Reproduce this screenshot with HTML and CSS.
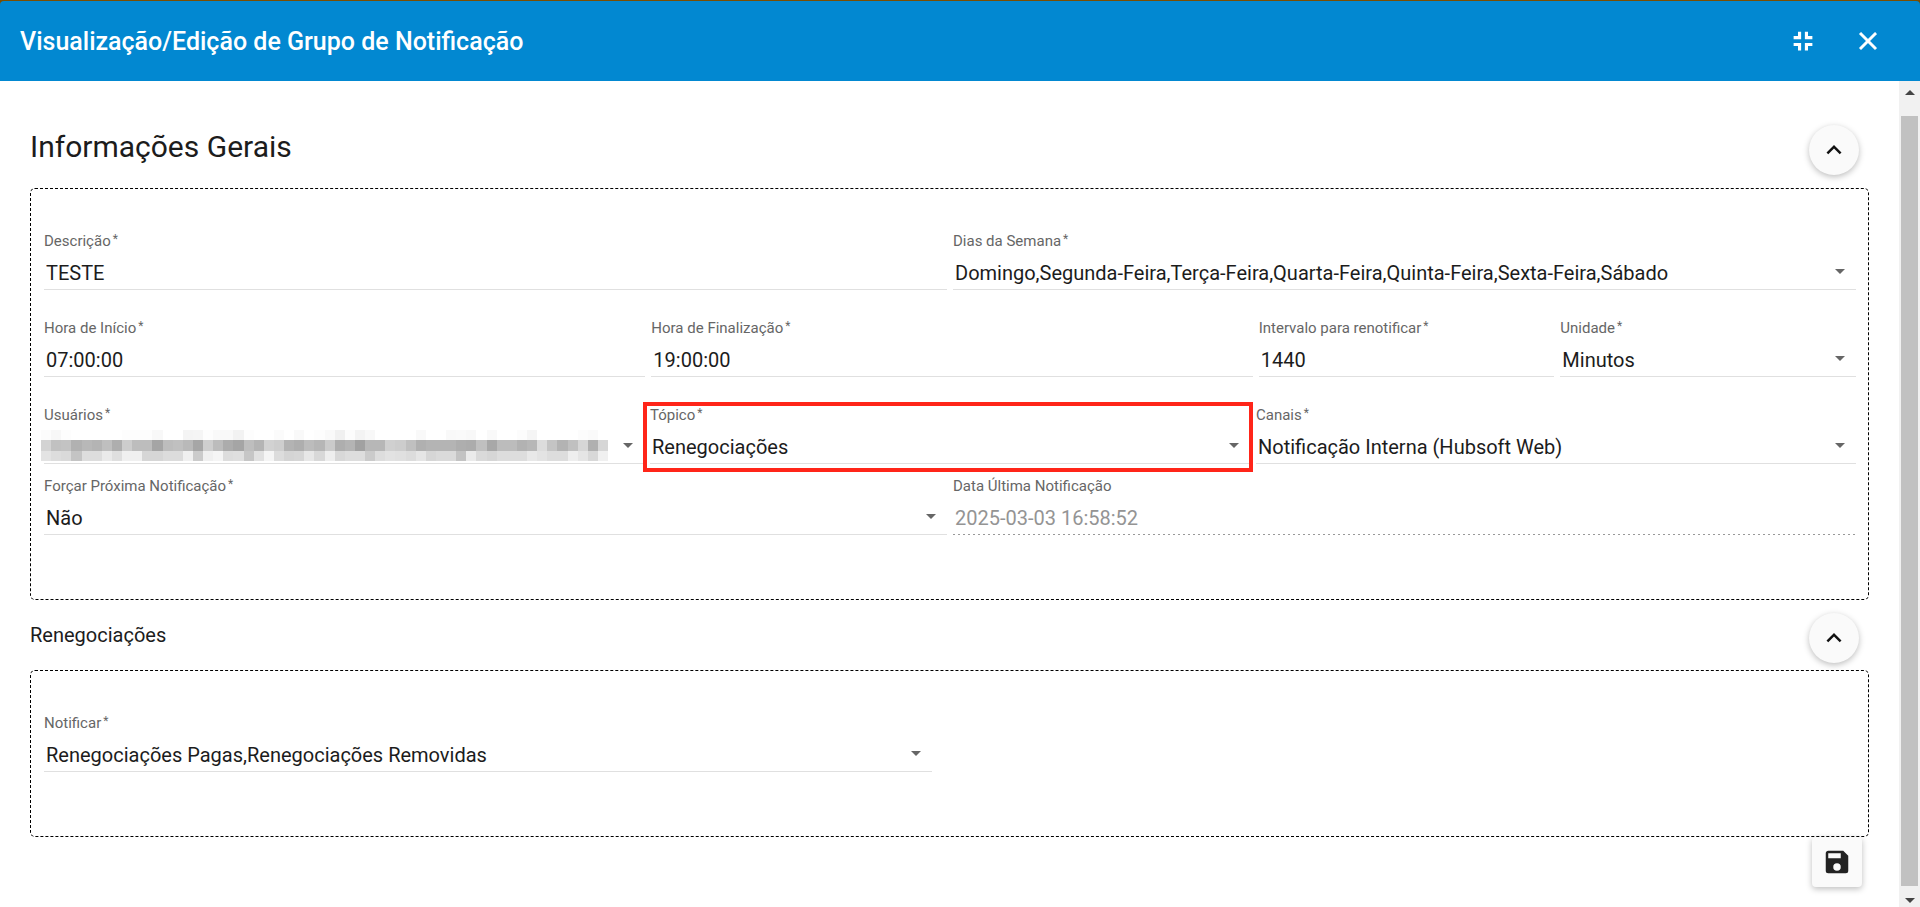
FILE: index.html
```html
<!DOCTYPE html>
<html lang="pt-BR">
<head>
<meta charset="utf-8">
<meta name="viewport" content="width=device-width, initial-scale=1">
<title>Visualização/Edição de Grupo de Notificação</title>
<link rel="stylesheet" href="styles.css">
</head>
<body>
<div class="dialog">
  <header class="toolbar">
    <h1 class="toolbar-title">Visualização/Edição de Grupo de Notificação</h1>
    <div class="toolbar-actions">
      <button class="icon-button" type="button" aria-label="Sair da tela cheia">
        <svg class="icon" viewBox="0 0 24 24"><path d="M4.500 13.500H10.500V19.500H8V16H4.500ZM13.500 13.500H19.500V16H16V19.500H13.500ZM8 4.500H10.500V10.500H4.500V8H8ZM13.500 4.500H16V8H19.500V10.500H13.500Z"/></svg>
      </button>
      <button class="icon-button" type="button" aria-label="Fechar">
        <svg class="icon icon-bold" viewBox="0 0 24 24"><path d="M19 6.410L17.590 5L12 10.590L6.410 5L5 6.410L10.590 12L5 17.590L6.410 19L12 13.410L17.590 19L19 17.590L13.410 12Z"/></svg>
      </button>
    </div>
  </header>
  <div class="body">
    <main class="content">
      <section>
        <div class="section-head">
          <h2 class="section-title section-title-large">Informações Gerais</h2>
          <button class="fab" type="button" aria-label="Recolher Informações Gerais">
            <svg class="icon" viewBox="0 0 24 24"><path d="M7.410 15.410L12 10.830L16.590 15.410L18 14L12 8L6 14Z"/></svg>
          </button>
        </div>
        <div class="panel">
          <div class="row row-halves row-spaced">
            <div class="field">
              <label class="label" for="descricao">Descrição<span class="required">*</span></label>
              <input class="control" id="descricao" type="text" value="TESTE">
            </div>
            <div class="field">
              <label class="label" for="dias">Dias da Semana<span class="required">*</span></label>
              <div class="select-box">
                <select class="control" id="dias"><option>Domingo,Segunda-Feira,Terça-Feira,Quarta-Feira,Quinta-Feira,Sexta-Feira,Sábado</option></select>
                <span class="caret"></span>
              </div>
            </div>
          </div>
          <div class="row row-times row-spaced">
            <div class="field">
              <label class="label" for="inicio">Hora de Início<span class="required">*</span></label>
              <input class="control" id="inicio" type="text" value="07:00:00">
            </div>
            <div class="field">
              <label class="label" for="fim">Hora de Finalização<span class="required">*</span></label>
              <input class="control" id="fim" type="text" value="19:00:00">
            </div>
            <div class="field">
              <label class="label" for="intervalo">Intervalo para renotificar<span class="required">*</span></label>
              <input class="control" id="intervalo" type="text" value="1440">
            </div>
            <div class="field">
              <label class="label" for="unidade">Unidade<span class="required">*</span></label>
              <div class="select-box">
                <select class="control" id="unidade"><option>Minutos</option></select>
                <span class="caret"></span>
              </div>
            </div>
          </div>
          <div class="row row-thirds">
            <div class="field">
              <label class="label" for="usuarios">Usuários<span class="required">*</span></label>
              <div class="select-box">
                <select class="control" id="usuarios"><option></option></select>
                <span class="caret"></span>
                <svg class="mosaic" id="mosaic" viewBox="0 0 56 3" preserveAspectRatio="none" shape-rendering="crispEdges" aria-hidden="true"></svg>
              </div>
            </div>
            <div class="field field-marked">
              <label class="label" for="topico">Tópico<span class="required">*</span></label>
              <div class="select-box">
                <select class="control" id="topico"><option>Renegociações</option></select>
                <span class="caret"></span>
              </div>
            </div>
            <div class="field">
              <label class="label" for="canais">Canais<span class="required">*</span></label>
              <div class="select-box">
                <select class="control" id="canais"><option>Notificação Interna (Hubsoft Web)</option></select>
                <span class="caret"></span>
              </div>
            </div>
          </div>
          <div class="row row-halves">
            <div class="field">
              <label class="label" for="forcar">Forçar Próxima Notificação<span class="required">*</span></label>
              <div class="select-box">
                <select class="control" id="forcar"><option>Não</option></select>
                <span class="caret"></span>
              </div>
            </div>
            <div class="field">
              <label class="label" for="ultima">Data Última Notificação</label>
              <input class="control" id="ultima" type="text" value="2025-03-03 16:58:52" disabled>
            </div>
          </div>
        </div>
      </section>
      <section>
        <div class="section-head section-head-compact">
          <h2 class="section-title">Renegociações</h2>
          <button class="fab" type="button" aria-label="Recolher Renegociações">
            <svg class="icon" viewBox="0 0 24 24"><path d="M7.410 15.410L12 10.830L16.590 15.410L18 14L12 8L6 14Z"/></svg>
          </button>
        </div>
        <div class="panel">
          <div class="row row-single">
            <div class="field">
              <label class="label" for="notificar">Notificar<span class="required">*</span></label>
              <div class="select-box">
                <select class="control" id="notificar"><option>Renegociações Pagas,Renegociações Removidas</option></select>
                <span class="caret"></span>
              </div>
            </div>
          </div>
        </div>
      </section>
      <div class="footer">
        <button class="fab fab-square" type="button" aria-label="Salvar">
          <svg class="icon" viewBox="0 0 24 24"><path d="M15 9H5V5H15M12 19A3 3 0 0 1 9 16A3 3 0 0 1 12 13A3 3 0 0 1 15 16A3 3 0 0 1 12 19M17 3H5C3.890 3 3 3.900 3 5V19A2 2 0 0 0 5 21H19A2 2 0 0 0 21 19V7L17 3Z"/></svg>
        </button>
      </div>
    </main>
    <div class="scrollbar" aria-hidden="true">
      <span class="scroll-arrow scroll-arrow-up"></span>
      <span class="scroll-thumb"></span>
      <span class="scroll-arrow scroll-arrow-down"></span>
    </div>
  </div>
</div>
<script src="script.js"></script>
</body>
</html>
```
FILE: styles.css
```css
* {
  box-sizing: border-box;
}

body {
  margin: 0;
  background: #7a4d00;
  color: #1c1c1c;
  font-family: Roboto, "Liberation Sans", sans-serif;
  font-size: 20px;
}

.dialog {
  display: flex;
  flex-direction: column;
  min-height: 100vh;
  padding-top: 1px;
}

.toolbar {
  display: flex;
  align-items: center;
  justify-content: space-between;
  height: 80px;
  padding: 0 30px 0 20px;
  border-radius: 4px 4px 0 0;
  background: #0288d1;
  color: #fff;
}

.toolbar-title {
  margin: 0;
  font-size: 25px;
  font-weight: 500;
}

.toolbar-actions {
  display: flex;
  gap: 20px;
}

.icon-button {
  display: grid;
  place-items: center;
  width: 45px;
  height: 50px;
  padding: 0;
  border: 0;
  background: none;
  color: inherit;
}

.icon {
  width: 30px;
  height: 30px;
  fill: currentColor;
}

.icon-bold {
  stroke: currentColor;
  stroke-width: 0.4;
}

.body {
  display: flex;
  flex: 1;
  background: #fff;
}

.content {
  flex: 1;
  min-width: 0;
  padding: 44px 30px 20px;
}

.section-head {
  display: flex;
  align-items: center;
  justify-content: space-between;
  padding: 0 10px 13px 0;
}

.section-head-compact {
  padding: 13px 10px 7px 0;
}

.section-title {
  margin: 0;
  padding-bottom: 6px;
  font-size: 20px;
  font-weight: 400;
}

.section-title-large {
  padding-bottom: 8px;
  font-size: 30px;
}

.fab {
  display: grid;
  place-items: center;
  width: 50px;
  height: 50px;
  padding: 0;
  border: 0;
  border-radius: 50%;
  background: #fafafa;
  color: #111;
  box-shadow: 0 2px 6px rgba(0, 0, 0, 0.26);
}

.fab-square {
  border-radius: 4px;
  color: #222;
}

.panel {
  padding: 42px 12px 64px 13px;
  border: 1px dashed #000;
  border-radius: 5px;
}

.row {
  display: grid;
  gap: 6px;
  padding-bottom: 12px;
}

.row:last-child {
  padding-bottom: 0;
}

.row-spaced {
  padding-bottom: 28px;
}

.row-halves {
  grid-template-columns: 1fr 1fr;
}

.row-thirds {
  grid-template-columns: 1fr 1fr 1fr;
}

.row-times {
  grid-template-columns: 602fr 602fr 296fr 296fr;
}

.row-single {
  grid-template-columns: 49%;
}

.field {
  display: flex;
  flex-direction: column;
  gap: 6px;
  min-width: 0;
}

.field-marked {
  position: relative;
}

.field-marked::after {
  content: "";
  position: absolute;
  inset: -3px -3px -8px -7px;
  border: 4px solid #ff2519;
  pointer-events: none;
}

.label {
  color: #666;
  font-size: 15px;
  line-height: 20px;
}

.required {
  margin-left: 2px;
  font-size: 12px;
  line-height: 12px;
  vertical-align: 3px;
}

.control {
  display: block;
  width: 100%;
  height: 33px;
  margin: 0;
  padding: 0 2px;
  border: 0;
  border-bottom: 1px solid #e0e0e0;
  border-radius: 0;
  background: transparent;
  color: #1c1c1c;
  font-family: inherit;
  font-size: 20px;
  appearance: none;
}

.control:disabled {
  border-bottom-color: transparent;
  background: repeating-linear-gradient(to right, #999 0 2px, transparent 2px 5px) left bottom / 100% 1px no-repeat border-box;
  color: #949494;
}

.select-box {
  position: relative;
}

.caret {
  position: absolute;
  top: 12px;
  right: 11px;
  border: 5px solid transparent;
  border-top-color: #666;
  border-bottom: 0;
  pointer-events: none;
}

.mosaic {
  position: absolute;
  top: -1px;
  left: -3px;
  width: calc(100% - 33px);
  height: 31px;
}

.footer {
  display: flex;
  justify-content: flex-end;
  padding-right: 7px;
}

.scrollbar {
  display: flex;
  flex-direction: column;
  align-items: center;
  width: 21px;
  background: #f1f1f1;
}

.scroll-arrow {
  border: 5px solid transparent;
}

.scroll-arrow-up {
  margin: 9px 0 21px;
  border-top: 0;
  border-bottom-color: #444;
}

.scroll-thumb {
  flex: 1;
  width: 17px;
  background: #c1c1c1;
}

.scroll-arrow-down {
  margin: 12px 0 4px;
  border-bottom: 0;
  border-top-color: #444;
}
```
FILE: script.js
```javascript
// Grey levels (two hex digits per cell) for the masked user names.
const rows = [
  "fcf7fdfffffffffffdfdfdf8fffff4f5fdf9f9f2fdfffffbfff9fffdf9f0fcf3f8fffffffff9fffff9faf8fff9fffffcf5fffffffffcfaff",
  "d3c1c3b1b8b4bfaecdbdbda5bdc0b9a6cebcaca5beb4d2ceb3aebcb6cbaeb4a1b7b7d0cdc0b0b4b4b4aeacc0a8bcbcb2b7dcc4b3c0d6b0d6",
  "e3dddac4ddddeadff0f0d6d6dcdcf0cbf0f5dddfc6e1f5dcd4d6e7d8eed8ddddcbdde2e0dce5d6dadac3ebdad6dddddde8e3ddddeee5d8f0"
];
const mosaic = document.getElementById("mosaic");
rows.forEach((row, y) => {
  row.match(/../g).forEach((grey, x) => {
    const cell = document.createElementNS("http://www.w3.org/2000/svg", "rect");
    cell.setAttribute("x", x);
    cell.setAttribute("y", y);
    cell.setAttribute("width", 1);
    cell.setAttribute("height", 1);
    cell.setAttribute("fill", "#" + grey + grey + grey);
    mosaic.appendChild(cell);
  });
});
```
